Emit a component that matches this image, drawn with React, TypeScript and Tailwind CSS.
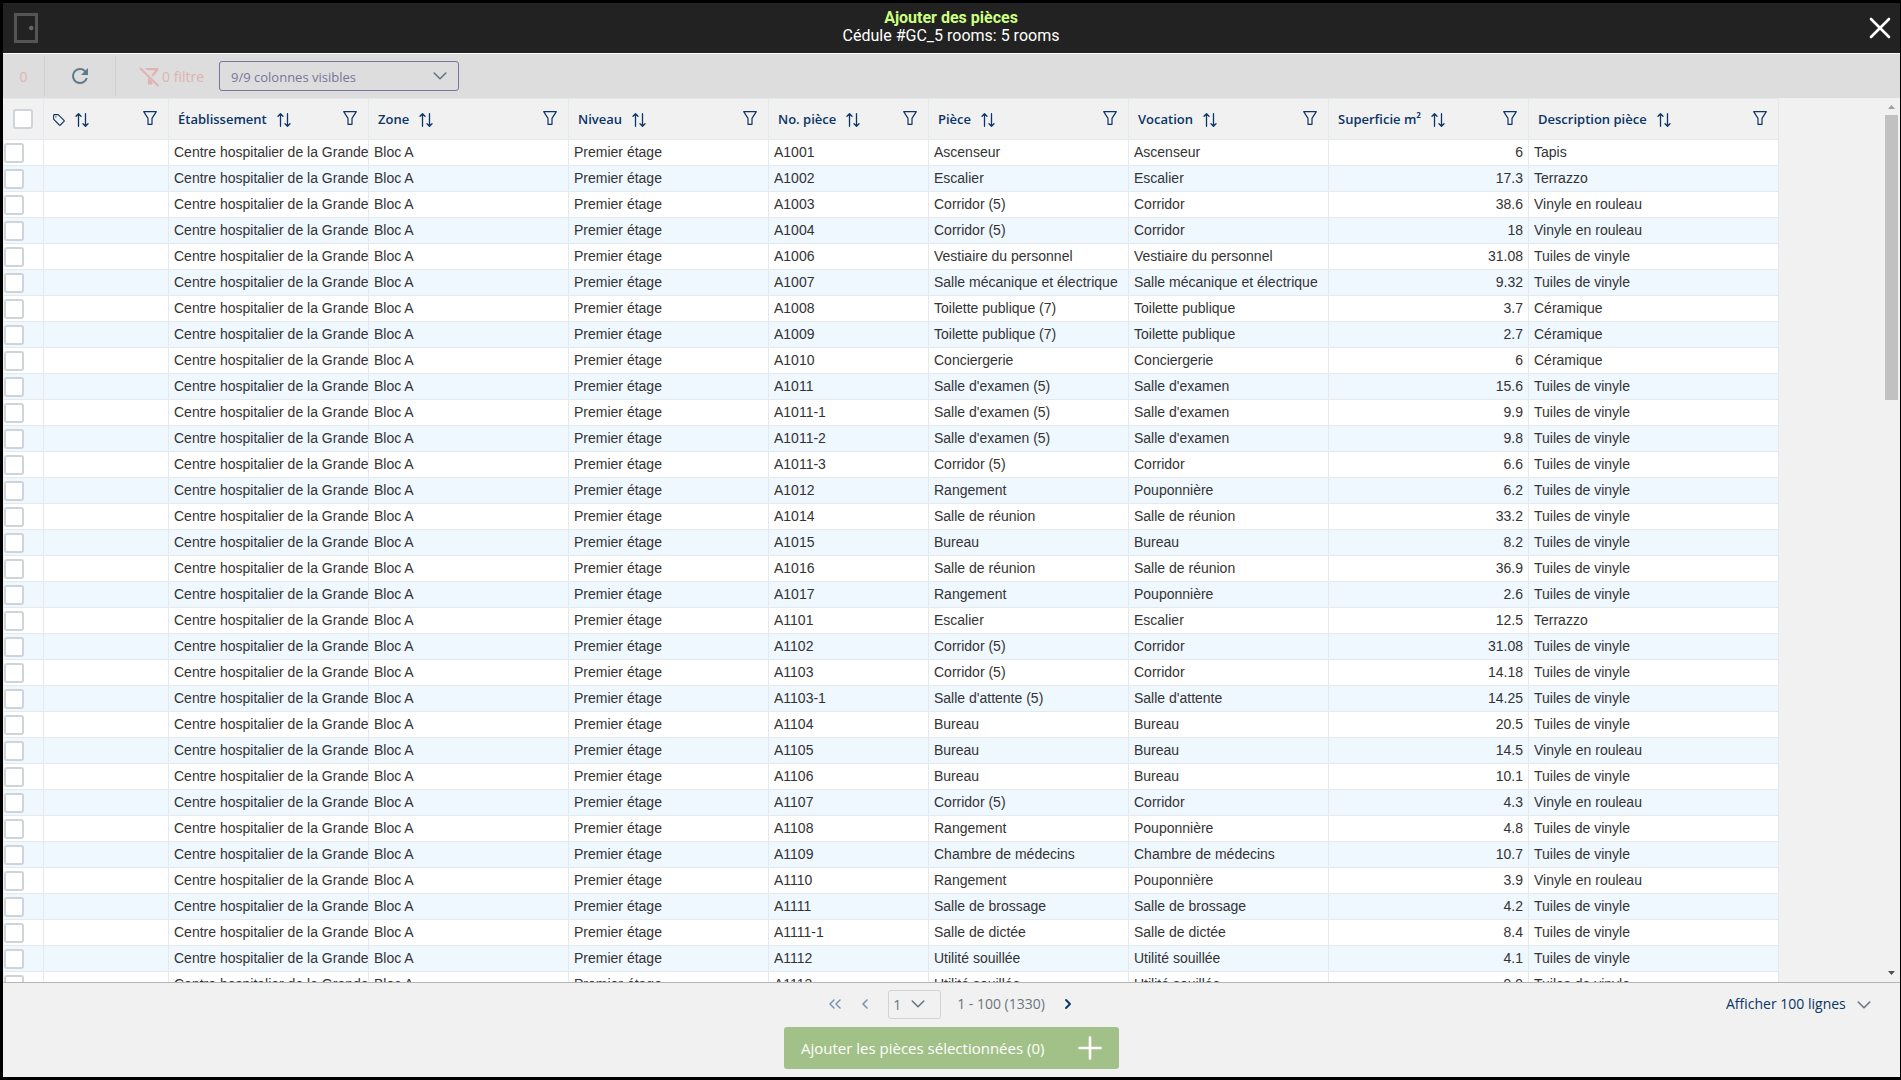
import React from "react";

type Row = [string, string, string, string, string];

const rows: Row[] = [
  ["A1001", "Ascenseur", "Ascenseur", "6", "Tapis"],
  ["A1002", "Escalier", "Escalier", "17.3", "Terrazzo"],
  ["A1003", "Corridor (5)", "Corridor", "38.6", "Vinyle en rouleau"],
  ["A1004", "Corridor (5)", "Corridor", "18", "Vinyle en rouleau"],
  ["A1006", "Vestiaire du personnel", "Vestiaire du personnel", "31.08", "Tuiles de vinyle"],
  ["A1007", "Salle mécanique et électrique", "Salle mécanique et électrique", "9.32", "Tuiles de vinyle"],
  ["A1008", "Toilette publique (7)", "Toilette publique", "3.7", "Céramique"],
  ["A1009", "Toilette publique (7)", "Toilette publique", "2.7", "Céramique"],
  ["A1010", "Conciergerie", "Conciergerie", "6", "Céramique"],
  ["A1011", "Salle d'examen (5)", "Salle d'examen", "15.6", "Tuiles de vinyle"],
  ["A1011-1", "Salle d'examen (5)", "Salle d'examen", "9.9", "Tuiles de vinyle"],
  ["A1011-2", "Salle d'examen (5)", "Salle d'examen", "9.8", "Tuiles de vinyle"],
  ["A1011-3", "Corridor (5)", "Corridor", "6.6", "Tuiles de vinyle"],
  ["A1012", "Rangement", "Pouponnière", "6.2", "Tuiles de vinyle"],
  ["A1014", "Salle de réunion", "Salle de réunion", "33.2", "Tuiles de vinyle"],
  ["A1015", "Bureau", "Bureau", "8.2", "Tuiles de vinyle"],
  ["A1016", "Salle de réunion", "Salle de réunion", "36.9", "Tuiles de vinyle"],
  ["A1017", "Rangement", "Pouponnière", "2.6", "Tuiles de vinyle"],
  ["A1101", "Escalier", "Escalier", "12.5", "Terrazzo"],
  ["A1102", "Corridor (5)", "Corridor", "31.08", "Tuiles de vinyle"],
  ["A1103", "Corridor (5)", "Corridor", "14.18", "Tuiles de vinyle"],
  ["A1103-1", "Salle d'attente (5)", "Salle d'attente", "14.25", "Tuiles de vinyle"],
  ["A1104", "Bureau", "Bureau", "20.5", "Tuiles de vinyle"],
  ["A1105", "Bureau", "Bureau", "14.5", "Vinyle en rouleau"],
  ["A1106", "Bureau", "Bureau", "10.1", "Tuiles de vinyle"],
  ["A1107", "Corridor (5)", "Corridor", "4.3", "Vinyle en rouleau"],
  ["A1108", "Rangement", "Pouponnière", "4.8", "Tuiles de vinyle"],
  ["A1109", "Chambre de médecins", "Chambre de médecins", "10.7", "Tuiles de vinyle"],
  ["A1110", "Rangement", "Pouponnière", "3.9", "Vinyle en rouleau"],
  ["A1111", "Salle de brossage", "Salle de brossage", "4.2", "Tuiles de vinyle"],
  ["A1111-1", "Salle de dictée", "Salle de dictée", "8.4", "Tuiles de vinyle"],
  ["A1112", "Utilité souillée", "Utilité souillée", "4.1", "Tuiles de vinyle"],
  ["A1113", "Utilité souillée", "Utilité souillée", "9.9", "Tuiles de vinyle"],
];

const headers = ["Établissement", "Zone", "Niveau", "No. pièce", "Pièce", "Vocation", "Superficie m²", "Description pièce"];

function Chevron({ className = "" }: { className?: string }) {
  return (
    <svg width="14" height="14" viewBox="0 0 14 14" fill="none" stroke="currentColor" strokeWidth="1.6" strokeLinecap="round" strokeLinejoin="round" className={className} aria-hidden="true">
      <path d="M1.2 4L7 9.8L12.8 4" />
    </svg>
  );
}

function SortIcon() {
  return (
    <svg width="14" height="14" viewBox="0 0 14 14" fill="none" stroke="currentColor" strokeWidth="1.3" strokeLinecap="round" strokeLinejoin="round" aria-hidden="true">
      <path d="M3.5 13.3V0.8M1 3.2L3.5 0.7L6 3.2M10.5 0.7V13.2M8 10.8L10.5 13.3L13 10.8" />
    </svg>
  );
}

function FilterIcon() {
  return (
    <svg width="14" height="14" viewBox="0 0 14 14" fill="none" stroke="currentColor" strokeWidth="1.2" strokeLinejoin="round" aria-hidden="true">
      <path d="M0.7 0.7H13.3L9 7.3V13.3H5V7.3Z" />
    </svg>
  );
}

function TagIcon() {
  return (
    <svg width="12" height="12" viewBox="0 0 12 12" fill="none" stroke="currentColor" strokeWidth="1.1" strokeLinejoin="round" aria-hidden="true">
      <path d="M0.6 1.4Q0.6 0.6 1.4 0.6H5.2L11 6.3Q11.5 6.9 11 7.4L7.4 11Q6.9 11.5 6.3 11L0.6 5.2Z" />
      <circle cx="2.9" cy="2.9" r="0.6" fill="currentColor" stroke="none" />
    </svg>
  );
}

function Check({ label }: { label: string }) {
  return (
    <input
      type="checkbox"
      aria-label={label}
      className="block size-5 appearance-none rounded-[3px] border-2 border-[#ced4da] bg-white checked:bg-[#0b3d78]"
    />
  );
}

function HeaderCell({ name, children }: { name: string; children: React.ReactNode }) {
  return (
    <th scope="col" className="border-t border-r border-b border-[#e4e9ee] p-0 text-left font-semibold">
      <div className="flex h-10 items-center pt-[2px] pr-[11px] pl-[9px]">
        {children}
        <button type="button" aria-label={`Trier par ${name}`} className="ml-[10px]">
          <SortIcon />
        </button>
        <button type="button" aria-label={`Filtrer ${name}`} className="mb-1 ml-auto">
          <FilterIcon />
        </button>
      </div>
    </th>
  );
}

const cell = "h-[26px] overflow-hidden border-r border-b border-[#e4e9ee] px-[5px] pt-0 pb-[2px] whitespace-nowrap";

export default function App() {
  return (
    <div className="flex h-screen flex-col overflow-hidden border-t-[3px] border-r border-b-[3px] border-l-[3px] border-black bg-[#f1f1f1] font-['Open_Sans','Noto_Sans',sans-serif] text-[13px]">
      <header className="grid h-[50px] shrink-0 grid-cols-[1fr_auto_1fr] items-center bg-[#222] pr-2 pl-[11px]">
        <svg width="24" height="30" viewBox="0 0 24 30" aria-hidden="true">
          <rect x="1.5" y="1.5" width="21" height="27" fill="none" stroke="#555" strokeWidth="3" />
          <circle cx="17.3" cy="15" r="2.3" fill="#666" />
        </svg>
        <div className="mr-1 pb-[2px] text-center font-[Roboto,sans-serif] text-base leading-[18px] text-white">
          <h1 className="font-bold text-[#ccff80]">Ajouter des pièces</h1>
          <p>Cédule #GC_5 rooms: 5 rooms</p>
        </div>
        <button type="button" aria-label="Fermer" className="justify-self-end text-white">
          <svg width="24" height="24" viewBox="0 0 24 24" fill="none" stroke="currentColor" strokeWidth="2.6" strokeLinecap="round" aria-hidden="true">
            <path d="M3 3L21 21M21 3L3 21" />
          </svg>
        </button>
      </header>

      <div className="flex h-[45px] shrink-0 items-center border-t border-white bg-[#ddd] text-sm">
        <button type="button" disabled className="h-10 w-[42px] border-r border-[#d0d0d0] pt-px text-[#dfb3b3]">
          0
        </button>
        <button type="button" aria-label="Rafraîchir" className="flex h-10 w-[71px] items-center justify-center border-r border-[#d0d0d0] text-[#5f7c8a]">
          <svg width="24" height="24" viewBox="0 0 24 24" fill="currentColor" aria-hidden="true">
            <path d="M17.65 6.35A7.96 7.96 0 0 0 12 4a8 8 0 1 0 7.73 10h-2.08A6 6 0 1 1 12 6c1.66 0 3.14.69 4.22 1.78L13 11h7V4z" />
          </svg>
        </button>
        <button type="button" disabled className="ml-[23px] flex items-center gap-[2px] pt-px text-[#dfb3b3]">
          <svg width="21" height="20" viewBox="0 0 21 20" aria-hidden="true">
            <path d="M6 1H19.3V3.2L14 9.8L12.4 8.2L16.4 3.2H8.2L6 1ZM9 10.5L13.4 14.8V17.5H9Z" fill="currentColor" />
            <path d="M1 1L19.5 19" stroke="currentColor" strokeWidth="2" />
          </svg>
          0 filtre
        </button>
        <div className="relative ml-[15px] w-60">
          <select aria-label="Colonnes visibles" className="h-[30px] w-full appearance-none rounded-[3px] border border-[#77759a] bg-transparent pt-[2px] pl-[11px] text-[13px] text-[#77759a]">
            <option>9/9 colonnes visibles</option>
          </select>
          <Chevron className="pointer-events-none absolute top-2 right-3 text-[#6c757d]" />
        </div>
      </div>

      <main className="flex min-h-0 flex-1 border-b border-[#b5b5b5]">
        <div className="min-w-0 flex-1 overflow-hidden pl-px">
          <table className="w-[1775px] table-fixed border-separate border-spacing-0">
            <colgroup>
              <col className="w-10" />
              <col className="w-[125px]" />
              <col className="w-[200px]" />
              <col className="w-[200px]" />
              <col className="w-[200px]" />
              <col className="w-[160px]" />
              <col className="w-[200px]" />
              <col className="w-[200px]" />
              <col className="w-[200px]" />
              <col className="w-[250px]" />
            </colgroup>
            <thead className="text-[#0a3566]">
              <tr>
                <th scope="col" className="border-t border-r border-b border-[#e4e9ee] p-0 pl-[9px]">
                  <Check label="Tout sélectionner" />
                </th>
                <HeaderCell name="étiquette">
                  <TagIcon />
                </HeaderCell>
                {headers.map((h) => (
                  <HeaderCell key={h} name={h}>
                    {h}
                  </HeaderCell>
                ))}
              </tr>
            </thead>
            <tbody className="font-['Liberation_Sans',Arial,sans-serif] text-sm leading-5 text-[#333]">
              {rows.map(([no, piece, vocation, area, desc]) => (
                <tr key={no} className="bg-white even:bg-[#eff7ff]">
                  <td className="h-[26px] border-r border-b border-[#e4e9ee] p-0">
                    <Check label={`Sélectionner ${no}`} />
                  </td>
                  <td className={cell}></td>
                  <td className={cell}>Centre hospitalier de la Grande</td>
                  <td className={cell}>Bloc A</td>
                  <td className={cell}>Premier étage</td>
                  <td className={cell}>{no}</td>
                  <td className={cell}>{piece}</td>
                  <td className={cell}>{vocation}</td>
                  <td className={`${cell} text-right`}>{area}</td>
                  <td className={cell}>{desc}</td>
                </tr>
              ))}
            </tbody>
          </table>
        </div>
        <div className="flex w-[17px] shrink-0 flex-col items-center" aria-hidden="true">
          <svg width="17" height="17" viewBox="0 0 17 17">
            <path d="M5 11L8.5 7L12 11Z" fill="#a0a0a0" />
          </svg>
          <div className="h-[285px] w-[13px] bg-[#c1c1c1]" />
          <svg width="17" height="17" viewBox="0 0 17 17" className="mt-auto">
            <path d="M5 6L8.5 10L12 6Z" fill="#505050" />
          </svg>
        </div>
      </main>

      <footer className="h-[94px] shrink-0">
        <div className="mb-[2px] grid h-[42px] grid-cols-[1fr_auto_1fr] items-center text-sm text-[#6c757d]">
          <nav aria-label="Pagination" className="col-start-2 flex items-center">
            <button type="button" disabled aria-label="Première page" className="text-[#7c95b3]">
              <svg width="14" height="14" viewBox="0 0 14 14" fill="none" stroke="currentColor" strokeWidth="1.6" strokeLinecap="round" strokeLinejoin="round" aria-hidden="true">
                <path d="M6 3L2 7L6 11M12 3L8 7L12 11" />
              </svg>
            </button>
            <button type="button" disabled aria-label="Page précédente" className="ml-4 text-[#7c95b3]">
              <svg width="14" height="14" viewBox="0 0 14 14" fill="none" stroke="currentColor" strokeWidth="1.7" strokeLinecap="round" strokeLinejoin="round" aria-hidden="true">
                <path d="M9 3L5 7L9 11" />
              </svg>
            </button>
            <div className="relative ml-4 w-[53px]">
              <select aria-label="Page" className="block h-[29px] w-full appearance-none rounded-[3px] border border-[#ced4da] bg-transparent pt-[2px] pl-1 text-sm text-[#6c757d]">
                <option>1</option>
              </select>
              <Chevron className="pointer-events-none absolute top-[7px] right-4" />
            </div>
            <span className="ml-4">1 - 100 (1330)</span>
            <button type="button" aria-label="Page suivante" className="ml-4 text-[#0a3566]">
              <svg width="14" height="14" viewBox="0 0 14 14" fill="none" stroke="currentColor" strokeWidth="1.9" strokeLinecap="round" strokeLinejoin="round" aria-hidden="true">
                <path d="M5 3L9 7L5 11" />
              </svg>
            </button>
          </nav>
          <div className="relative mr-[29px] justify-self-end">
            <select aria-label="Lignes par page" className="block appearance-none bg-transparent pr-[25px] text-sm text-[#0a3566]">
              <option>Afficher 100 lignes</option>
            </select>
            <Chevron className="pointer-events-none absolute top-1 right-0" />
          </div>
        </div>
        <button type="button" disabled className="mx-auto flex h-[42px] w-[335px] items-center justify-between rounded-[3px] bg-[#a2c188] px-[17px] text-[15px] text-white">
          Ajouter les pièces sélectionnées (0)
          <svg width="24" height="24" viewBox="0 0 24 24" stroke="currentColor" strokeWidth="2.6" strokeLinecap="round" aria-hidden="true">
            <path d="M12 1.5V22.5M1.5 12H22.5" />
          </svg>
        </button>
      </footer>
    </div>
  );
}
